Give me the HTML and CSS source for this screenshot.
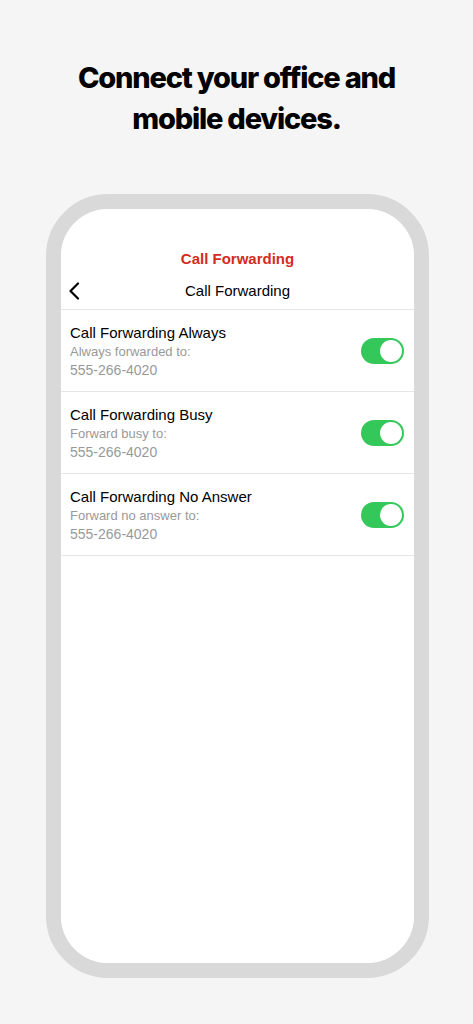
FILE: index.html
```html
<!DOCTYPE html>
<html lang="en">

<head>
  <meta charset="UTF-8">
  <meta name="viewport" content="width=device-width, initial-scale=1.0">
  <title>Call Forwarding</title>
  <link rel="stylesheet" href="styles.css">
</head>

<body>
  <h1 class="headline">Connect your office and<br>mobile devices.</h1>

  <div class="phone">
    <div class="screen">
      <div class="status"></div>
      <div class="brand">Call Forwarding</div>
      <div class="nav">
        <svg class="back" width="12" height="18" viewBox="0 0 12 18">
          <path d="M10 1.5 L2.5 9 L10 16.5" fill="none" stroke="#000" stroke-width="2.2" stroke-linecap="round" stroke-linejoin="round"/>
        </svg>
        <span class="nav-title">Call Forwarding</span>
      </div>

      <ul class="list">
        <li class="row">
          <div class="row-text">
            <p class="row-title">Call Forwarding Always</p>
            <p class="row-sub">Always forwarded to:</p>
            <p class="row-sub">555-266-4020</p>
          </div>
          <span class="toggle on"></span>
        </li>
        <li class="row">
          <div class="row-text">
            <p class="row-title">Call Forwarding Busy</p>
            <p class="row-sub">Forward busy to:</p>
            <p class="row-sub">555-266-4020</p>
          </div>
          <span class="toggle on"></span>
        </li>
        <li class="row">
          <div class="row-text">
            <p class="row-title">Call Forwarding No Answer</p>
            <p class="row-sub">Forward no answer to:</p>
            <p class="row-sub">555-266-4020</p>
          </div>
          <span class="toggle on"></span>
        </li>
      </ul>
    </div>
  </div>
</body>

</html>
```

FILE: styles.css
```css
* {
  margin: 0;
  padding: 0;
  box-sizing: border-box;
}

html {
  background-color: #f5f5f5;
}

body {
  font-family: "Liberation Sans", Arial, sans-serif;
  color: #000;
}

li {
  list-style: none;
}

.headline {
  font-family: Inter, "Liberation Sans", sans-serif;
  font-weight: 800;
  font-size: 29px;
  line-height: 41px;
  letter-spacing: -1.2px;
  text-align: center;
  padding-top: 57px;
  height: 194px;
}

.phone {
  width: 383px;
  height: 784px;
  margin-left: 46px;
  border: 15px solid #d8d9d8;
  border-radius: 62px;
  background-color: #fff;
  overflow: hidden;
}

.screen {
  height: 100%;
  background-color: #fff;
  border-radius: 47px;
}

.status {
  height: 36px;
}

.brand {
  height: 27px;
  line-height: 27px;
  text-align: center;
  color: #d52b1e;
  font-weight: bold;
  font-size: 15px;
}

.nav {
  display: flex;
  align-items: center;
  justify-content: center;
  position: relative;
  height: 38px;
  border-bottom: 1px solid #e6e6e6;
}

.back {
  position: absolute;
  left: 7px;
  top: 10px;
}

.nav-title {
  font-size: 15px;
  line-height: 20px;
}

.row {
  display: flex;
  align-items: center;
  justify-content: space-between;
  height: 82px;
  padding: 13px 10px 12px 9px;
  border-bottom: 1px solid #e6e6e6;
}

.row-title {
  font-size: 15px;
  line-height: 20px;
}

.row-sub {
  font-size: 13px;
  line-height: 18px;
  color: #999;
}

.row-sub + .row-sub {
  font-size: 14px;
}

.toggle {
  width: 43px;
  height: 26px;
  border-radius: 13px;
  background-color: #d8d9d8;
  position: relative;
}

.toggle.on {
  background-color: #34c759;
}

.toggle::after {
  content: "";
  position: absolute;
  top: 2px;
  left: 2px;
  width: 22px;
  height: 22px;
  border-radius: 50%;
  background-color: #fff;
}

.toggle.on::after {
  left: 19px;
}
```
